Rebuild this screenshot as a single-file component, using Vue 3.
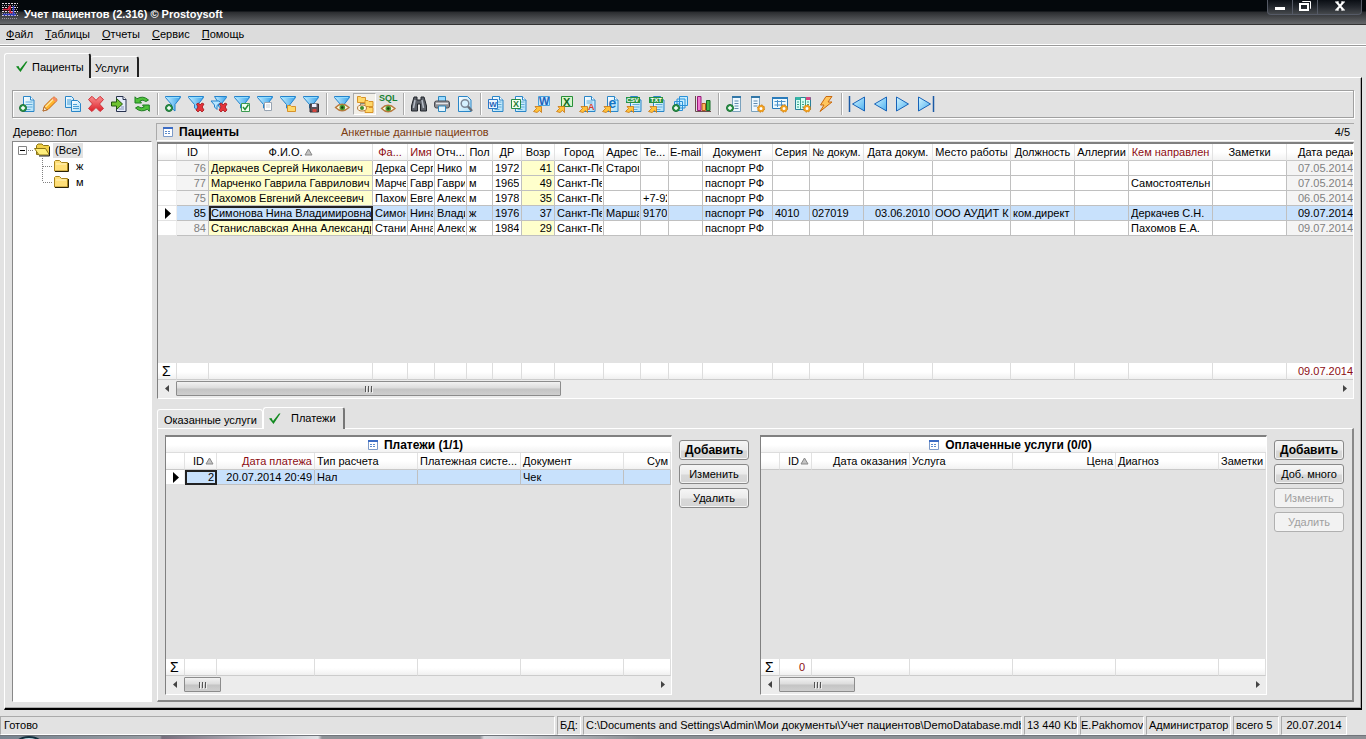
<script setup>
import { ref } from 'vue'

const menu = ['Файл', 'Таблицы', 'Отчеты', 'Сервис', 'Помощь']

const plus = '<circle cx="4" cy="12" r="3.5" fill="#2f9a4a" stroke="#1b6e35"/><path d="M4 10v4M2 12h4" stroke="#fff" stroke-width="1.4"/>'
const cross = '<path d="M8.5 8l2-1L12 9l2-2 2 1-1.800 3L16 14l-2 2-2-2-2 2-2-2 2-3z" fill="#e5343a" stroke="#a3151c" stroke-width=".8"/>'
const gear = '<circle cx="12" cy="12.500" r="2.500" fill="#fff" stroke="#f0a020" stroke-width="2"/><circle cx="12" cy="12.500" r="3.600" fill="none" stroke="#c87810" stroke-dasharray="1.400 1.400"/>'
const funnel = '<path d="M.5 .5h15v1L10 8.500V15L6.500 12V8.500L.5 1.500z" fill="url(#ic-funnel)" stroke="#2383cc"/><path d="M2 1.500h12" stroke="#8fdcff"/>'
const eye = '<path d="M1.500 11.500Q8 5 15 11.500Q8 18 1.500 11.500z" fill="#fff6df" stroke="#b87a3e" stroke-width="1.400"/><circle cx="8.300" cy="11.500" r="2.800" fill="#4d9c30"/><circle cx="8.300" cy="11.500" r="1.200" fill="#143a10"/>'
const arrow = '<path d="M-.5 15.500L2.500 12.500 1 10.500h6.500v6L5.500 14.500l-2.500 2z" fill="#ffc23c" stroke="#c87510" stroke-width=".8"/>'
const page = '<path d="M4.500.5h7l3.500 3.500v11.500H4.500z" fill="url(#ic-page)" stroke="#2a86c8"/><path d="M11.500.5V4H15" fill="#fff" stroke="#2a86c8"/>'
const lines = '<path d="M6.500 6h7M6.500 8.500h7M6.500 11h7M6.500 13.500h5" stroke="#62acd9"/>'
const letter = (x, y, s, t, c) => `<text x="${x}" y="${y}" font-family="Liberation Sans, sans-serif" font-weight="700" font-size="${s}" fill="${c}">${t}</text>`
const folder = (x, y) => `<path d="M${x} ${y}h3l1 1h4v5h-8z" fill="#ffd86a" stroke="#d48a1c" stroke-width=".9"/>`

const icons = {
  add: page + lines + plus,
  edit: '<path d="M1 15l1.500-5L11 1.500q1-1 2 0l1.500 1.500q1 1 0 2L6 13.500z" fill="#ffb42c" stroke="#c4640e"/><path d="M3.500 11l8-8" stroke="#ffe79c" stroke-width="1.500"/><path d="M1 15l1.200-4 2.900 2.800z" fill="#fff0cc" stroke="#a4602a" stroke-width=".8"/><path d="M11 1.500q1-1 2 0l1.500 1.500q1 1 0 2l-1 1-3.500-3.500z" fill="#f58c68"/>',
  copy: '<path d="M.5.5h6l2 2v9h-8z" fill="url(#ic-page)" stroke="#2a86c8"/><path d="M2 4h4M2 6h4M2 8h4" stroke="#4b9fd6"/><path d="M6.500 4.500h6l3 3v8h-9z" fill="url(#ic-page)" stroke="#2a86c8"/><path d="M8 8.500h4M8 10.500h6M8 12.500h6" stroke="#4b9fd6"/>',
  del: '<path d="M.5 3.500L4 .3l4 4 4-4 3.500 3.200L11.500 8l4 4.500-3.500 3L8 11.500l-4 4L.5 12.500 4.500 8z" fill="url(#ic-red)" stroke="#d2323a"/>',
  goto: '<path d="M5.500 .5h6.500l3 3v12H5.500z" fill="#e6ecfa" stroke="#27324e"/><path d="M12 .5v3h3" fill="#fff" stroke="#27324e"/><path d="M7.500 13h5.500M10 11h3" stroke="#8190b8"/><path d="M.5 6h5V2.500l6 5.500-6 5.500V10h-5z" fill="#6fc22e" stroke="#23560f"/>',
  refresh: '<path d="M1 .8l2 2Q9-1 14.500 4l-2.500 1.500Q9 3 5.800 5L7.500 7H1z" fill="#4fc13a" stroke="#1d7c20"/><path d="M15.300 15.300l-2-2Q7 17 1.500 12L4 10.500Q7 13 10.200 11L8.500 9h6.800z" fill="#4fc13a" stroke="#1d7c20"/>',
  fAdd: funnel + plus,
  fDel: funnel + cross,
  fDelAll: '<path d="M3.500 .5h12v1L11 7v7L7.500 10V7z" fill="url(#ic-funnel)" stroke="#2383cc"/><path d="M0 5h8l1.500 1.500L6 9.500v4L3.500 11V9z" fill="#b8e6ff" stroke="#2383cc"/>' + cross,
  fOk: funnel + '<path d="M7.500 7.500h8v8h-8z" fill="#f3fff0" stroke="#3c9a52"/><path d="M9 11l2 2.500 3.500-5" stroke="#249038" stroke-width="1.500" fill="none"/>',
  fDoc: funnel + '<path d="M7.500 6.500h7v8h-7z" fill="#fff" stroke="#98a4b2"/><path d="M9 9h4M9 11h4" stroke="#c6ced6"/>',
  fOpen: funnel + folder(7.5, 9.5),
  fSave: funnel + '<path d="M7 8h8.500v8H7z" fill="#5a5258" stroke="#342c32"/><path d="M9 8h4.500v3H9z" fill="#eef"/><path d="M9.500 13h4v3h-4z" fill="#d4443c"/>',
  fEye: funnel + eye,
  tree: '<path d="M3.500 4v9H8M3.500 7.500H8" fill="none" stroke="#8b8b78"/>' + folder(0.5, 0.5) + folder(8, 4.5) + folder(8, 10.5) + '<ellipse cx="5" cy="12" rx="4.500" ry="3" fill="#fff6df" stroke="#b87a3e"/><circle cx="5" cy="12" r="2" fill="#3f8c2c"/>',
  sql: '<g transform="translate(0 1)">' + eye + '</g>' + letter(-1, 4.5, 9, 'SQL', '#168030'),
  find: '<path d="M3 1h3v3h4V1h3l2.500 9v5H9.500V8h-3v7H.5v-5z" fill="#5c6068" stroke="#22262c"/><path d="M4 4l-1.500 8M11 4l1.500 8" stroke="#b6bcc6" stroke-width="1.500"/>',
  print: '<path d="M4.500.5h7V6h-7z" fill="#9bdbff" stroke="#2d86bd"/><rect x=".5" y="5" width="15" height="7" rx="2" fill="#8d8d92" stroke="#4b4b52"/><path d="M2 7.500h12" stroke="#e4e4e8" stroke-width="1.500"/><path d="M4.500 10h7v5.500h-7z" fill="#e2f5ff" stroke="#2d86bd"/>',
  preview: '<path d="M1.500.5h9l3.500 3.500v11.500H1.500z" fill="url(#ic-page)" stroke="#2a86c8"/><circle cx="8" cy="7.500" r="3.800" fill="#d5f1ff" stroke="#7c8796" stroke-width="1.500"/><path d="M11 10.500l4 4.500" stroke="#636d78" stroke-width="2.400"/>',
  word: page + lines + '<path d="M.5 3.500h9v9h-9z" fill="#e9f6ff" stroke="#2878c8"/>' + letter(1.2, 11, 8, 'W', '#1e62b8'),
  excel: page + lines + '<path d="M.5 3.500h9v9h-9z" fill="#effff0" stroke="#258a48"/>' + letter(2, 11, 9, 'X', '#1f7c38'),
  toWord: '<path d="M4.500.5h11v9h-11z" fill="#c8e8ff" stroke="#4aa2dc"/>' + letter(5, 9, 11, 'W', '#1e62b8') + arrow,
  toExcel: '<path d="M4.500.5h11v10h-11z" fill="#d4f5cc" stroke="#289038"/>' + letter(6, 9.5, 11, 'X', '#126a22') + arrow,
  toPdf: page + '<path d="M6.500 5h6M6.500 7h6" stroke="#62acd9"/>' + letter(8, 14, 9, 'A', '#d93c28') + arrow,
  toHtml: page + letter(5.5, 12, 14, 'e', '#1474c4') + arrow,
  toCsv: page + lines + '<path d="M0 1h14v6H0z" fill="#279340"/>' + letter(.5, 6.3, 6, 'CSV', '#fff') + arrow,
  toTxt: page + lines + '<path d="M0 1h14v6H0z" fill="#279340"/>' + letter(1.5, 6.3, 6, 'TXT', '#fff') + arrow,
  multi: '<path d="M7.500.5h8v9h-8zM5 3h8v9H5zM2.500 5.500h8v9h-8z" fill="#c5edff" stroke="#2b91d8"/><path d="M4.500 8h4M4.500 10h4" stroke="#2b91d8"/>' + plus,
  chart: '<path d="M.5 0v15.500H16" fill="none" stroke="#6b4c4c"/><path d="M2.500 .5h3.500v14H2.500z" fill="#f07ad0" stroke="#971a78"/><path d="M7 7.500h3.500v7H7z" fill="#f8bc5c" stroke="#b4541c"/><path d="M11.500 4.500h3.500v10h-3.500z" fill="#48b84a" stroke="#176a28"/>',
  colAdd: '<path d="M6.500.5h8v15h-8z" fill="#eef8ff" stroke="#7ba2bd"/><path d="M6 1h9" stroke="#3377a8" stroke-width="2"/><path d="M8.500 5h4M8.500 7.500h4M8.500 10h4M8.500 12.500h4" stroke="#5f8bb0"/>' + plus,
  colSet: '<path d="M2.500.5h8v15h-8z" fill="#eef8ff" stroke="#7ba2bd"/><path d="M2 1h9" stroke="#3377a8" stroke-width="2"/><path d="M4.500 5h4M4.500 7.500h4M4.500 10h4" stroke="#5f8bb0"/>' + gear,
  tblSet: '<path d="M.5 1.500h15v11H.5z" fill="#eefaff" stroke="#2b7cbb"/><path d="M0 2h16" stroke="#2b7cbb" stroke-width="2"/><path d="M2.500 5.500h11M2.500 9h11M5.500 4v7M9.500 4v7" stroke="#4a91cb"/>' + gear,
  gridSet: '<path d="M.5 1.500h15v12H.5z" fill="#d6fff5" stroke="#287f99"/><path d="M.5 1h5v3h-5z" fill="#34b5a5"/><path d="M10.500 1h5v3h-5z" fill="#d54682"/><path d="M5.500 1v12M10.500 1v12M2 6h2M2 8.500h2M2 11h2M7 6h2M7 8.500h2M7 11h2M12 6h2M12 8.500h2" stroke="#3aa08a"/>' + gear,
  bolt: '<path d="M8 .5h6L10 6h4L2 15.500 6 9H2.500z" fill="#ffc55c" stroke="#c9690e"/>',
  first: '<path d="M.5 0v16" stroke="#1b5aa5" stroke-width="1.500"/><path d="M15.500 1v14L3.500 8z" fill="url(#ic-blue)" stroke="#1763b8"/>',
  prev: '<path d="M14.500 1v14L2.500 8z" fill="url(#ic-blue)" stroke="#1763b8"/>',
  next: '<path d="M1.500 1v14L13.500 8z" fill="url(#ic-blue)" stroke="#1763b8"/>',
  last: '<path d="M15.500 0v16" stroke="#1b5aa5" stroke-width="1.500"/><path d="M.5 1v14L12.500 8z" fill="url(#ic-blue)" stroke="#1763b8"/>',
}

const toolbar = [
  ['add', 'edit', 'copy', 'del', 'goto', 'refresh'],
  ['fAdd', 'fDel', 'fDelAll', 'fOk', 'fDoc', 'fOpen', 'fSave'],
  ['fEye', 'tree', 'sql'],
  ['find', 'print', 'preview'],
  ['word', 'excel', 'toWord', 'toExcel', 'toPdf', 'toHtml', 'toCsv', 'toTxt', 'multi', 'chart'],
  ['colAdd', 'colSet', 'tblSet', 'gridSet', 'bolt'],
  ['first', 'prev', 'next', 'last'],
]

const patientCols = [
  ['', 'c19'], ['ID', 'c32'], ['Ф.И.О.', 'c164'], ['Фа...', 'c35', 'red'], ['Имя', 'c27', 'red'], ['Отч...', 'c32'],
  ['Пол', 'c26'], ['ДР', 'c29'], ['Возр', 'c33'], ['Город', 'c49'], ['Адрес', 'c37'], ['Те...', 'c28'],
  ['E-mail', 'c34'], ['Документ', 'c70'], ['Серия', 'c37'], ['№ докум.', 'c54'], ['Дата докум.', 'c69'],
  ['Место работы', 'c78'], ['Должность', 'c64'], ['Аллергии', 'c54'], ['Кем направлен', 'c84', 'red'],
  ['Заметки', 'c74'], ['Дата редак', 'rest', 'lead'],
]
const rightCols = [1, 7, 8, 16]
const patients = [
  ['76', 'Деркачев Сергей Николаевич', 'Дерка', 'Серг', 'Нико', 'м', '1972', '41', 'Санкт-Пе', 'Старог', '', '', 'паспорт РФ', '', '', '', '', '', '', '', '', '07.05.2014'],
  ['77', 'Марченко Гаврила Гаврилович', 'Марче', 'Гавр', 'Гаври', 'м', '1965', '49', 'Санкт-Пе', '', '', '', 'паспорт РФ', '', '', '', '', '', '', 'Самостоятельн', '', '07.05.2014'],
  ['75', 'Пахомов Евгений Алексеевич', 'Пахом', 'Евге', 'Алеко', 'м', '1978', '35', 'Санкт-Пе', '', '+7-92', '', 'паспорт РФ', '', '', '', '', '', '', '', '', '06.05.2014'],
  ['85', 'Симонова Нина Владимировна', 'Симон', 'Нина', 'Влади', 'ж', '1976', '37', 'Санкт-Пе', 'Марша', '9170', '', 'паспорт РФ', '4010', '027019', '03.06.2010', 'ООО АУДИТ К', 'ком.директ', '', 'Деркачев С.Н.', '', '09.07.2014'],
  ['84', 'Станиславская Анна Александр', 'Стани', 'Анна', 'Алеко', 'ж', '1984', '29', 'Санкт-Пе', '', '', '', 'паспорт РФ', '', '', '', '', '', '', 'Пахомов Е.А.', '', '09.07.2014'],
]
const selected = ref(3)

const panes = [
  {
    title: 'Платежи (1/1)',
    thumb: 'thumb-s',
    total: '',
    cols: [['', 'c19'], ['ID', 'c32', 'r'], ['Дата платежа', 'c98', 'r red'], ['Тип расчета', 'c103'], ['Платежная систе...', 'c103'], ['Документ', 'c103'], ['Сум', 'rest', 'r']],
    rows: [['2', '20.07.2014 20:49', 'Нал', '', 'Чек', '']],
    buttons: [['Добавить', 'bold', false], ['Изменить', '', false], ['Удалить', '', false]],
  },
  {
    title: 'Оплаченные услуги (0/0)',
    thumb: 'thumb-m',
    total: '0',
    cols: [['', 'c19'], ['ID', 'c32', 'r'], ['Дата оказания', 'c98', 'r'], ['Услуга', 'c103'], ['Цена', 'c103', 'r'], ['Диагноз', 'c103'], ['Заметки', 'rest']],
    rows: [],
    buttons: [['Добавить', 'bold', false], ['Доб. много', '', false], ['Изменить', '', true], ['Удалить', '', true]],
  },
]
</script>

<template>
  <div class="app">
    <svg class="defs" width="0" height="0" aria-hidden="true">
      <defs>
        <linearGradient id="ic-blue" x1="0" y1="0" x2="1" y2="1"><stop offset="0" stop-color="#d4f6ff" /><stop offset="1" stop-color="#4cb0f0" /></linearGradient>
        <linearGradient id="ic-funnel" x1="0" y1="0" x2="1" y2="0"><stop offset="0" stop-color="#c4eeff" /><stop offset="1" stop-color="#3aa2ea" /></linearGradient>
        <linearGradient id="ic-page" x1="0" y1="0" x2="1" y2="1"><stop offset="0" stop-color="#ffffff" /><stop offset="1" stop-color="#a9def8" /></linearGradient>
        <linearGradient id="ic-red" x1="0" y1="0" x2="0" y2="1"><stop offset="0" stop-color="#f99090" /><stop offset="1" stop-color="#dd1f28" /></linearGradient>
      </defs>
    </svg>

    <header class="titlebar">
      <svg class="logo" width="16" height="16" viewBox="0 0 16 16" aria-hidden="true">
        <path d="M0 .5h16M0 4.500h16M0 8.500h16M0 12.500h16" stroke="#e4d6e0" stroke-dasharray="2 1" />
        <path d="M0 2.500h16M0 6.500h16M0 10.500h16M0 15.500h16" stroke="#a09aa8" stroke-dasharray="1 1" />
        <path d="M1 6.500h5l2-4v7h3" fill="none" stroke="#d6203a" stroke-width="1.500" />
        <path d="M1 11.500h13M11.500 3v10" fill="none" stroke="#2c3cc0" stroke-width="1.500" />
      </svg>
      <h1>Учет пациентов (2.316) © Prostoysoft</h1>
      <div class="winbtns">
        <button aria-label="Свернуть"><svg width="12" height="12" viewBox="0 0 12 12"><path d="M1 7h10v3H1z" fill="#fff" /></svg></button>
        <button aria-label="Восстановить"><svg width="12" height="12" viewBox="0 0 12 12"><path d="M3.500 2V1.500h8v7H11" fill="none" stroke="#fff" /><path d="M1 4h8v6H1z" fill="none" stroke="#fff" stroke-width="2" /></svg></button>
        <button class="close" aria-label="Закрыть"><svg width="12" height="12" viewBox="0 0 12 12"><path d="M2.500 2l7 8M9.500 2l-7 8" stroke="#fff" stroke-width="2" /><path d="M1 2h4M7 2h4M1 10h4M7 10h4" stroke="#fff" /></svg></button>
      </div>
    </header>

    <nav class="menu">
      <button v-for="m in menu" :key="m"><u>{{ m[0] }}</u>{{ m.slice(1) }}</button>
    </nav>

    <main class="body">
      <div class="tabs">
        <button class="tab main-tab on"><svg class="check" width="12" height="12" viewBox="0 0 12 12" aria-hidden="true"><path d="M0 5.500l2.500-.5 1.500 3L10 .5h1.500L4.500 11z" fill="#128a20" /></svg>Пациенты</button>
        <button class="tab main-tab second">Услуги</button>
      </div>

      <div class="panel">
        <div class="toolbar">
          <div v-for="(group, g) in toolbar" :key="g" class="group">
            <button v-for="name in group" :key="name" :class="{ pressed: name === 'tree' }" :aria-label="name">
              <svg width="16" height="16" viewBox="0 0 16 16" v-html="icons[name]"></svg>
            </button>
          </div>
        </div>

        <div class="columns">
          <aside class="side">
            <div class="side-label">Дерево: Пол</div>
            <div class="tree">
              <div class="node">
                <svg width="19" height="16" viewBox="0 0 19 16" aria-hidden="true"><path d="M3.500 4.500h8v8h-8z" fill="#fff" stroke="#848484" /><path d="M5 8.500h5" stroke="#000" /><path d="M13 8.500h6" stroke="#808080" stroke-dasharray="1 1" /></svg>
                <svg width="17" height="16" viewBox="0 0 17 16" aria-hidden="true"><path d="M2.500 12.500v-9l1.500-1.500h4l1.500 1.500h5l1 1v8.500z" fill="#f2d048" stroke="#8a7414" /><path d="M.5 6.500h11l4 6.500H5z" fill="#ffef7c" stroke="#8a7414" /><path d="M15.500 5v9H5" fill="none" stroke="#222" /></svg>
                <span class="node-text root">(Все)</span>
              </div>
              <div v-for="(n, i) in ['ж', 'м']" :key="n" class="node">
                <svg width="38" height="16" viewBox="0 0 38 16" aria-hidden="true"><path :d="i ? 'M27.500 0v8' : 'M27.500 0v16'" stroke="#808080" stroke-dasharray="1 1" /><path d="M28 8.500h10" stroke="#808080" stroke-dasharray="1 1" /></svg>
                <svg width="17" height="16" viewBox="0 0 17 16" aria-hidden="true"><path d="M1.500 13v-9.500l1-1h4l2 2h6v8.500z" fill="#ffdf78" stroke="#a8841c" /><path d="M3 6h10" stroke="#fff4c0" /><path d="M15.500 5v8.500H2" fill="none" stroke="#2c2408" /></svg>
                <span class="node-text">{{ n }}</span>
              </div>
            </div>
          </aside>

          <section class="content">
            <div class="caption">
              <svg width="10" height="10" viewBox="0 0 10 10" aria-hidden="true"><path d="M.5.5h9v9h-9z" fill="#fff" stroke="#7c9ac8" /><path d="M0 1h10" stroke="#3c6cc4" stroke-width="2" /><path d="M2 4.500h6M2 6.500h6" stroke="#5c8acb" stroke-dasharray="2 1" /></svg>
              <h2>Пациенты</h2>
              <span class="hint">Анкетные данные пациентов</span>
              <span class="count">4/5</span>
            </div>

            <div class="grid top-grid">
              <table class="data patients">
                <colgroup><col v-for="(c, i) in patientCols" :key="i" :class="c[1]" /></colgroup>
                <thead>
                  <tr>
                    <th v-for="(c, i) in patientCols" :key="i" :class="c[2]">{{ c[0] }}<svg v-if="i === 2" class="sort" width="9" height="8" viewBox="0 0 9 8"><path d="M4.500 1l3.500 6h-7z" fill="#c4c4c4" stroke="#888" /></svg></th>
                  </tr>
                </thead>
                <tbody>
                  <tr v-for="(r, k) in patients" :key="k" :class="{ sel: k === selected }" @click="selected = k">
                    <td class="mark"><svg v-if="k === selected" width="6" height="11" viewBox="0 0 6 11"><path d="M0 0l6 5.500L0 11z" /></svg></td>
                    <td v-for="(v, i) in r" :key="i" :class="{ r: rightCols.includes(i + 1), dim: i === 0 || i === 21, tint: i === 1 || i === 7, focus: i === 1 && k === selected, lead: i === 21 }"><div class="clip">{{ v }}</div></td>
                  </tr>
                </tbody>
              </table>
              <div class="filler"></div>
              <table class="data sums">
                <colgroup><col v-for="(c, i) in patientCols" :key="i" :class="c[1]" /></colgroup>
                <tfoot><tr><td v-for="(c, i) in patientCols" :key="i" :class="i ? 'lead red' : 'sigma'">{{ i === 0 ? 'Σ' : i === 22 ? '09.07.2014' : '' }}</td></tr></tfoot>
              </table>
              <div class="scroll">
                <button class="arr" aria-label="Влево"><svg width="5" height="7" viewBox="0 0 5 7"><path d="M4 0v7L0 3.500z" fill="#444" /></svg></button>
                <div class="track"><div class="thumb thumb-l"><i></i><i></i><i></i></div></div>
                <button class="arr" aria-label="Вправо"><svg width="5" height="7" viewBox="0 0 5 7"><path d="M1 0v7l4-3.500z" fill="#444" /></svg></button>
              </div>
            </div>

            <div class="tabs sub-tabs">
              <button class="tab sub first">Оказанные услуги</button>
              <button class="tab sub on"><svg class="check" width="12" height="12" viewBox="0 0 12 12" aria-hidden="true"><path d="M0 5.500l2.500-.5 1.500 3L10 .5h1.500L4.500 11z" fill="#128a20" /></svg>Платежи</button>
            </div>

            <div class="lower">
              <div v-for="p in panes" :key="p.title" class="pane">
                <div class="grid">
                  <h3><svg width="10" height="10" viewBox="0 0 10 10" aria-hidden="true"><path d="M.5.5h9v9h-9z" fill="#fff" stroke="#7c9ac8" /><path d="M0 1h10" stroke="#3c6cc4" stroke-width="2" /><path d="M2 4.500h6M2 6.500h6" stroke="#5c8acb" stroke-dasharray="2 1" /></svg>{{ p.title }}</h3>
                  <table class="data small">
                    <colgroup><col v-for="(c, i) in p.cols" :key="i" :class="c[1]" /></colgroup>
                    <thead>
                      <tr><th v-for="(c, i) in p.cols" :key="i" :class="c[2]">{{ c[0] }}<svg v-if="i === 1" class="sort" width="9" height="8" viewBox="0 0 9 8"><path d="M4.500 1l3.500 6h-7z" fill="#c4c4c4" stroke="#888" /></svg></th></tr>
                    </thead>
                    <tbody>
                      <tr v-for="(r, k) in p.rows" :key="k" class="sel">
                        <td class="mark"><svg width="6" height="11" viewBox="0 0 6 11"><path d="M0 0l6 5.500L0 11z" /></svg></td>
                        <td v-for="(v, i) in r" :key="i" :class="{ r: i < 2, focus: i === 0 }"><div class="clip">{{ v }}</div></td>
                      </tr>
                    </tbody>
                  </table>
                  <div class="filler"></div>
                  <table class="data sums">
                    <colgroup><col v-for="(c, i) in p.cols" :key="i" :class="c[1]" /></colgroup>
                    <tfoot><tr><td v-for="(c, i) in p.cols" :key="i" :class="i ? 'r red total' : 'sigma'">{{ i === 0 ? 'Σ' : i === 1 ? p.total : '' }}</td></tr></tfoot>
                  </table>
                  <div class="scroll">
                    <button class="arr" aria-label="Влево"><svg width="5" height="7" viewBox="0 0 5 7"><path d="M4 0v7L0 3.500z" fill="#444" /></svg></button>
                    <div class="track"><div class="thumb" :class="p.thumb"><i></i><i></i><i></i></div></div>
                    <button class="arr" aria-label="Вправо"><svg width="5" height="7" viewBox="0 0 5 7"><path d="M1 0v7l4-3.500z" fill="#444" /></svg></button>
                  </div>
                </div>
                <div class="actions">
                  <button v-for="b in p.buttons" :key="b[0]" class="btn" :class="b[1]" :disabled="b[2]">{{ b[0] }}</button>
                </div>
              </div>
            </div>
          </section>
        </div>
      </div>
    </main>

    <footer class="status">
      <span class="grow">Готово</span>
      <span class="s-db">БД:</span>
      <span class="s-path">C:\Documents and Settings\Admin\Мои документы\Учет пациентов\DemoDatabase.mdb</span>
      <span class="s-size">13 440 Kb</span>
      <span class="s-user">E.Pakhomov</span>
      <span class="s-role">Администратор</span>
      <span class="s-total">всего 5</span>
      <span class="s-date">20.07.2014</span>
    </footer>
    <div class="taskbar"><i></i></div>
  </div>
</template>

<style>
body { margin: 0; background: #e2e2e2; }
</style>

<style scoped>
* { box-sizing: border-box; }
.app { display: flex; flex-direction: column; height: 100vh; min-height: 560px; overflow: hidden; background: #e2e2e2; color: #000; font: 11px/15px "Liberation Sans", Arial, sans-serif; }
.defs { position: absolute; }
button { font: inherit; color: inherit; border: 0; padding: 0; margin: 0; background: none; }
svg { display: block; flex: none; }
h1, h2, h3 { margin: 0; font-weight: 700; }

.titlebar { display: flex; align-items: flex-start; flex: none; height: 25px; padding-left: 2px; background: linear-gradient(#04080c 0, #04080c 11px, #2a2c2f 12px, #66686b 24px, #333 24px); }
.logo { margin-top: 3px; }
h1 { flex: 1; padding: 7px 0 0 6px; color: #fff; font-size: 11px; line-height: 15px; }
.winbtns { display: flex; height: 15px; margin-right: 4px; border: 1px solid #555a66; border-top: 0; border-radius: 0 0 4px 4px; background: linear-gradient(#0a0e14, #24282e 7px, #45484c); }
.winbtns button { display: flex; justify-content: center; width: 25px; border-right: 1px solid #555a66; }
.winbtns .close { width: 43px; border-right: 0; }

.menu { display: flex; flex: none; gap: 12px; height: 22px; padding: 2px 6px 0; background: #dcdcdc; border-bottom: 1px solid #fff; box-shadow: inset 0 -1px #999, inset 0 -2px #fff; }
.menu button { height: 15px; line-height: 15px; }

.body { display: flex; flex: 1; flex-direction: column; min-height: 0; padding: 6px 4px 6px; }
.tabs { display: flex; flex: none; align-items: flex-end; height: 24px; }
.tab { display: flex; align-items: center; border-top: 1px solid #fff; border-left: 1px solid #fff; border-right: 2px solid #222; border-radius: 3px 3px 0 0; white-space: nowrap; }
.main-tab { height: 21px; padding: 2px 4px 0; }
.main-tab.on { position: relative; height: 25px; width: 87px; gap: 4px; padding: 2px 0 0 11px; margin-bottom: -1px; background: #e2e2e2; }
.second { width: 48px; border-left: 0; }
.panel { display: flex; flex: 1; flex-direction: column; min-height: 0; padding: 12px 7px 6px; border: 1px solid #fff; border-right: 1px solid #000; border-bottom: 2px solid #000; box-shadow: inset -1px -1px #aaa; }

.toolbar { display: flex; flex: none; align-items: center; height: 28px; padding: 0 2px; border: 1px solid #a0a0a0; box-shadow: inset 1px 1px #fff, 1px 1px #fff; }
.group { display: flex; flex: none; }
.group + .group { margin-left: 4px; padding-left: 3px; border-left: 1px solid #aaa; box-shadow: inset 1px 0 #fff; }
.group button { display: flex; align-items: center; justify-content: center; width: 23px; height: 22px; }
.group .pressed { border: 1px solid #aaa; border-right-color: #fff; border-bottom-color: #fff; background: #f2efe8; }
.group svg { overflow: visible; }

.columns { display: flex; flex: 1; gap: 4px; min-height: 0; padding-top: 5px; }
.side { display: flex; flex: none; flex-direction: column; width: 140px; }
.side-label { flex: none; height: 18px; padding: 2px 1px 0; }
.tree { flex: 1; padding: 0 0 0 2px; background: #fff; border: 1px solid #888; border-right-color: #fff; border-bottom-color: #fff; }
.node { display: flex; height: 16px; align-items: center; }
.node-text { padding: 0 2px; margin-left: 4px; line-height: 15px; }
.root { margin-left: 2px; background: #e2e2e2; }
.content { display: flex; flex: 1; flex-direction: column; min-width: 0; }

.caption { display: flex; flex: none; align-items: center; height: 18px; padding: 0 4px 0 6px; border-top: 1px solid #aaa; border-left: 1px solid #aaa; border-bottom: 1px solid #fff; }
.caption h2 { padding-left: 6px; width: 168px; font-size: 12px; line-height: 16px; }
.hint { color: #7c3c10; }
.count { margin-left: auto; }

.grid { display: flex; flex-direction: column; min-width: 0; border: 1px solid #fff; border-top: 2px solid #808080; border-left: 1px solid #808080; overflow: hidden; }
.top-grid { flex: none; height: 257px; margin: 1px 0 0 1px; }
.filler { flex: 1; }
.data { flex: none; width: 100%; table-layout: fixed; border-collapse: separate; border-spacing: 0; }
.data th, .data td { padding: 0 1px 0 2px; overflow: hidden; white-space: nowrap; text-align: left; font-weight: 400; }
.data th { height: 17px; padding-left: 1px; text-align: center; line-height: 16px; border-right: 1px solid #e2e2e2; border-bottom: 1px solid #c8c8c8; background: linear-gradient(#fff, #fff 8px, #f2f2f2); }
.small th { text-align: left; padding-left: 2px; }
.data td { height: 15px; line-height: 14px; border-right: 1px solid #c0c0c0; border-bottom: 1px solid #c0c0c0; background: #fff; }
.patients tbody td { padding-right: 1px; }
.clip { overflow: hidden; height: 14px; }
.data .r { text-align: right; padding-right: 2px; }
.data .red { color: #8c0c12; }
.data .lead { text-align: left; padding-left: 11px; padding-right: 0; border-right-width: 0; }
.data .dim { color: #808080; background: #f4f4f4; }
.data .tint { background: #ffffcc; }
.data .mark { padding: 0 0 0 7px; border-right-color: #eee; border-bottom-color: #e2e2e2; }
.data .sel td:not(.mark) { color: #000; background: #c8e1fc; }
.data .sel .focus { outline: 2px solid #222; outline-offset: -2px; }
.sort { display: inline-block; margin-left: 1px; }
.data.sums td { height: 17px; line-height: 16px; border-right: 1px solid #ddd; border-bottom: 1px solid #ccc; background: linear-gradient(#fff, #fff 9px, #f0f0f0); }
.data.sums .lead:last-child { border-right-width: 0; }
.data.sums .sigma { padding-left: 4px; font: 400 14px/16px "Liberation Sans", sans-serif; }
.sums .total { padding-right: 6px; }
.c19 { width: 19px; } .c26 { width: 26px; } .c27 { width: 27px; } .c28 { width: 28px; } .c29 { width: 29px; }
.c32 { width: 32px; } .c33 { width: 33px; } .c34 { width: 34px; } .c35 { width: 35px; } .c37 { width: 37px; }
.c49 { width: 49px; } .c54 { width: 54px; } .c64 { width: 64px; } .c69 { width: 69px; } .c70 { width: 70px; }
.c74 { width: 74px; } .c78 { width: 78px; } .c84 { width: 84px; } .c98 { width: 98px; } .c103 { width: 103px; } .c164 { width: 164px; }

.scroll { display: flex; flex: none; height: 18px; padding: 1px 0 2px; background: #ececec; }
.arr { display: flex; align-items: center; justify-content: center; width: 18px; }
.track { display: flex; flex: 1; min-width: 0; }
.thumb { display: flex; align-items: center; justify-content: center; gap: 2px; border: 1px solid #8c8c8c; border-radius: 1px; background: linear-gradient(#f2f2f2, #dcdcdc 6px, #c4c4c4 7px, #cfcfcf); }
.thumb i { width: 1px; height: 6px; background: #555; box-shadow: 1px 1px #eee; }
.thumb-l { width: 385px; } .thumb-m { width: 76px; } .thumb-s { width: 37px; }

.sub-tabs { height: 29px; padding-left: 1px; }
.sub { height: 19px; padding: 2px 0 0 6px; border-right: 1px solid #fff; }
.sub.first { width: 106px; }
.sub.on { position: relative; height: 22px; width: 82px; gap: 10px; padding: 0 0 0 5px; margin-bottom: -1px; border-right: 2px solid #777; background: #e2e2e2; }
.lower { display: grid; grid-template-columns: 1fr 1fr; flex: 1; gap: 11px; min-height: 0; margin-left: 1px; padding: 6px 8px 5px 7px; border: 1px solid #fff; border-right: 2px solid #888; border-bottom: 2px solid #888; }
.pane { display: flex; gap: 7px; min-width: 0; min-height: 0; }
.pane .grid { flex: 1; }
.pane h3 { display: flex; flex: none; align-items: center; justify-content: center; gap: 6px; height: 16px; padding-right: 6px; font-size: 12px; line-height: 16px; border-bottom: 1px solid #ddd; background: linear-gradient(#fff, #fff 8px, #f2f2f2); }
.actions { display: flex; flex: none; flex-direction: column; gap: 4px; width: 70px; padding-top: 5px; }
.btn { height: 20px; border: 1px solid #888; border-radius: 3px; background: linear-gradient(#f6f6f6, #eaeaea 9px, #d8d8d8 10px, #d4d4d4); box-shadow: inset 0 0 0 1px #f4f4f4; line-height: 16px; white-space: nowrap; }
.btn.bold { font-weight: 700; font-size: 12px; }
.btn:disabled { color: #a0a0a0; border-color: #b0b0b0; background: #f2f2f2; }

.status { display: flex; flex: none; gap: 2px; height: 19px; padding-right: 19px; }
.status span { flex: none; padding: 0 2px; border: 1px solid #aaa; border-right-color: #fff; border-bottom-color: #fff; white-space: nowrap; overflow: hidden; line-height: 17px; }
.status .grow { flex: 1; min-width: 0; padding-left: 3px; }
.s-db { width: 24px; } .s-path { width: 439px; } .s-size { width: 54px; }
.status .s-user { width: 64px; padding: 0; text-align: center; }
.s-role { width: 85px; } .s-total { width: 46px; } .s-date { width: 66px; text-align: center; }
.taskbar { flex: none; height: 4px; padding-left: 14px; overflow: hidden; border-top: 1px solid #70747a; background: linear-gradient(90deg, #788490 0, #9a9ea4 160px, #77707e 162px, #dfe2e6 318px, #8f9398 322px, #8f9398 480px, #d8dadf 484px, #8d9095 640px, #8d9095); }
.taskbar i { display: block; width: 30px; height: 20px; border: 2px solid #12303e; border-radius: 50%; background: #bfe0ea; }
</style>
